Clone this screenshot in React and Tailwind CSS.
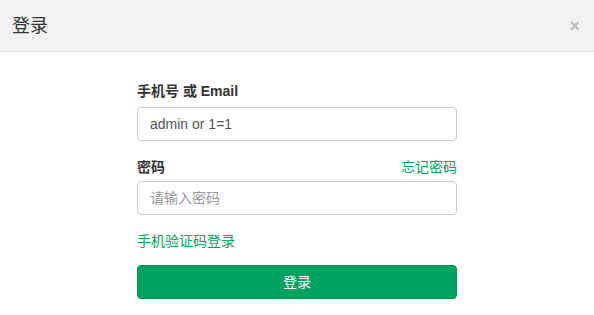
export default function App() {
  const font = { fontFamily: '"Liberation Sans", Arial, "Noto Sans CJK SC", sans-serif' };
  return (
    <div className="w-[594px] h-[315px] bg-white overflow-hidden" style={font}>
      <div className="h-[52px] bg-[#f2f2f2] border-b border-[#e3e3e3] flex items-center justify-between pl-[12px] pr-[14px]">
        <span className="text-[18px] text-[#333] leading-none">登录</span>
        <span className="text-[#bdbdbd] text-[18px] font-bold leading-none">×</span>
      </div>
      <div className="w-[320px] mx-auto pt-[29px] flex flex-col">
        <label className="text-[14px] font-bold text-[#333] leading-[20px]">手机号 或 Email</label>
        <div className="mt-[6px] h-[34px] border border-[#ccc] rounded-[4px] px-[12px] flex items-center text-[14px] text-[#555]">admin or 1=1</div>
        <div className="mt-[16px] flex justify-between leading-[20px] text-[14px]">
          <span className="font-bold text-[#333]">密码</span>
          <span className="text-[#00a261]">忘记密码</span>
        </div>
        <div className="mt-[4px] h-[34px] border border-[#ccc] rounded-[4px] px-[12px] flex items-center text-[14px] text-[#999]">请输入密码</div>
        <div className="mt-[16px] text-[14px] leading-[20px] text-[#00a261]">手机验证码登录</div>
        <div className="mt-[14px] h-[34px] bg-[#00a261] border border-[#009658] rounded-[4px] flex items-center justify-center text-white text-[14px]">登录</div>
      </div>
    </div>
  );
}
